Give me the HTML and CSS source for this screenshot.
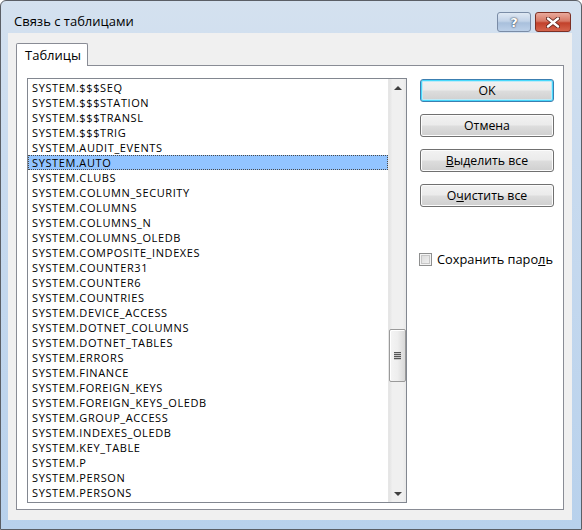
FILE: index.html
```html
<!DOCTYPE html>
<html lang="ru">
<head>
<meta charset="utf-8">
<title>Связь с таблицами</title>
<link rel="stylesheet" href="styles.css">
</head>
<body>
<div class="window">
  <div class="titlebar">
    <span class="title">Связь с таблицами</span>
    <div class="caption-btns">
      <div class="cbtn help">?</div>
      <div class="cbtn close">
        <svg width="14" height="11" viewBox="0 0 14 11"><path d="M2 1.5 L12 9.5 M12 1.5 L2 9.5" stroke="#5a1f17" stroke-width="4" stroke-linecap="round"/><path d="M2 1.5 L12 9.5 M12 1.5 L2 9.5" stroke="#fff" stroke-width="2.4" stroke-linecap="round"/></svg>
      </div>
    </div>
  </div>
  <div class="client">
    <div class="tabs"><div class="tab">Таблицы</div></div>
    <div class="page">
      <div class="listbox">
        <div class="items">
          <div class="item">SYSTEM.$$$SEQ</div>
          <div class="item">SYSTEM.$$$STATION</div>
          <div class="item">SYSTEM.$$$TRANSL</div>
          <div class="item">SYSTEM.$$$TRIG</div>
          <div class="item">SYSTEM.AUDIT_EVENTS</div>
          <div class="item selected">SYSTEM.AUTO</div>
          <div class="item">SYSTEM.CLUBS</div>
          <div class="item">SYSTEM.COLUMN_SECURITY</div>
          <div class="item">SYSTEM.COLUMNS</div>
          <div class="item">SYSTEM.COLUMNS_N</div>
          <div class="item">SYSTEM.COLUMNS_OLEDB</div>
          <div class="item">SYSTEM.COMPOSITE_INDEXES</div>
          <div class="item">SYSTEM.COUNTER31</div>
          <div class="item">SYSTEM.COUNTER6</div>
          <div class="item">SYSTEM.COUNTRIES</div>
          <div class="item">SYSTEM.DEVICE_ACCESS</div>
          <div class="item">SYSTEM.DOTNET_COLUMNS</div>
          <div class="item">SYSTEM.DOTNET_TABLES</div>
          <div class="item">SYSTEM.ERRORS</div>
          <div class="item">SYSTEM.FINANCE</div>
          <div class="item">SYSTEM.FOREIGN_KEYS</div>
          <div class="item">SYSTEM.FOREIGN_KEYS_OLEDB</div>
          <div class="item">SYSTEM.GROUP_ACCESS</div>
          <div class="item">SYSTEM.INDEXES_OLEDB</div>
          <div class="item">SYSTEM.KEY_TABLE</div>
          <div class="item">SYSTEM.P</div>
          <div class="item">SYSTEM.PERSON</div>
          <div class="item">SYSTEM.PERSONS</div>
        </div>
        <div class="scrollbar">
          <div class="sb-btn"><span class="arrow-up"></span></div>
          <div class="track">
            <div class="thumb"><span class="grip"></span><span class="grip"></span><span class="grip"></span><span class="grip"></span></div>
          </div>
          <div class="sb-btn"><span class="arrow-down"></span></div>
        </div>
      </div>
      <div class="side">
        <div class="btn default">OK</div>
        <div class="btn">Отмена</div>
        <div class="btn"><u>В</u>ыделить все</div>
        <div class="btn">О<u>ч</u>истить все</div>
        <label class="check"><span class="box"></span><span>Сохранить паро<u>л</u>ь</span></label>
      </div>
    </div>
  </div>
</div>
</body>
</html>
```

FILE: styles.css
```css
html, body {
  margin: 0;
  padding: 0;
  background: #ffffff;
}
body {
  width: 582px;
  height: 530px;
  overflow: hidden;
  font-family: "Open Sans", "Noto Sans", sans-serif;
  font-size: 12px;
  color: #000;
}
.window {
  box-sizing: border-box;
  width: 582px;
  height: 530px;
  border: 1px solid #5b5f66;
  border-radius: 6px 6px 0 0;
  background: linear-gradient(to bottom, #d4e1ef 0%, #c9dbef 30%, #b8d1ec 100%);
  display: flex;
  flex-direction: column;
}
.titlebar {
  height: 32px;
  display: flex;
  align-items: flex-start;
  justify-content: space-between;
  padding: 0 10px 0 13px;
}
.title {
  margin-top: 11px;
  font-size: 13px;
  color: #000;
}
.caption-btns {
  display: flex;
  gap: 4px;
  margin-top: 11px;
}
.cbtn {
  box-sizing: border-box;
  height: 20px;
  border-radius: 3px;
  display: flex;
  align-items: center;
  justify-content: center;
}
.help {
  width: 34px;
  border: 1px solid #7a8ca6;
  background: linear-gradient(to bottom, #dfe8f3 0%, #c2d3e8 45%, #a9c0dc 55%, #bcd0e8 100%);
  color: #fff;
  font-weight: bold;
  font-size: 13px;
  font-family: "DejaVu Sans", sans-serif;
  text-shadow: 0 0 2px #2d3c52, 0 0 1px #2d3c52;
}
.close {
  width: 36px;
  border: 1px solid #7d3024;
  background: linear-gradient(to bottom, #e9a99b 0%, #d77966 45%, #c2412b 55%, #d5644c 100%);
}
.client {
  flex: 1;
  margin: 0 9px 9px 7px;
  background: #f0f0f0;
  padding: 10px 8px 10px 8px;
  display: flex;
  flex-direction: column;
}
.tabs {
  display: flex;
  height: 22px;
  position: relative;
  z-index: 1;
}
.tab {
  box-sizing: border-box;
  width: 72px;
  height: 23px;
  border: 1px solid #898c95;
  border-bottom: none;
  border-radius: 2px 2px 0 0;
  background: #ffffff;
  padding: 2px 0 0 8px;
  font-size: 13px;
}
.page {
  box-sizing: border-box;
  height: 445px;
  border: 1px solid #898c95;
  background: #ffffff;
  padding: 12px 9px 0 10px;
  display: flex;
  gap: 13px;
}
.listbox {
  box-sizing: border-box;
  width: 380px;
  height: 425px;
  border: 1px solid #828790;
  display: flex;
  background: #fff;
}
.items {
  flex: 1;
  padding-top: 1px;
}
.item {
  height: 15px;
  line-height: 15px;
  padding-left: 4px;
  font-size: 11px;
  letter-spacing: 0.6px;
  white-space: nowrap;
  box-sizing: border-box;
  color: #000;
}
.item.selected {
  background: #92c4ff;
  outline: 1px dotted #4a4a4a;
  outline-offset: -1px;
}
.scrollbar {
  width: 17px;
  display: flex;
  flex-direction: column;
  background: linear-gradient(to right, #e3e3e3 0%, #f0f0f0 20%, #f0f0f0 80%, #e8e8e8 100%);
  border-left: 1px solid #e6e6e6;
}
.sb-btn {
  height: 17px;
  display: flex;
  align-items: center;
  justify-content: center;
}
.arrow-up {
  width: 0;
  height: 0;
  border-left: 4px solid transparent;
  border-right: 4px solid transparent;
  border-bottom: 4px solid #404040;
}
.arrow-down {
  width: 0;
  height: 0;
  border-left: 4px solid transparent;
  border-right: 4px solid transparent;
  border-top: 4px solid #404040;
}
.track {
  flex: 1;
  display: flex;
  flex-direction: column;
}
.thumb {
  box-sizing: border-box;
  margin-top: 233px;
  height: 53px;
  border: 1px solid #9a9a9a;
  border-radius: 2px;
  background: linear-gradient(to right, #f4f4f4 0%, #eeeeee 50%, #d8d8d8 100%);
  box-shadow: inset 1px 1px 0 #ffffff;
  display: flex;
  flex-direction: column;
  align-items: center;
  justify-content: center;
  gap: 1px;
}
.grip {
  width: 7px;
  height: 1px;
  background: #555;
  box-shadow: 0 1px 0 #c8c8c8;
}
.side {
  width: 134px;
  padding-top: 1px;
  display: flex;
  flex-direction: column;
  gap: 12px;
}
.btn {
  box-sizing: border-box;
  height: 23px;
  border: 1px solid #707070;
  border-radius: 3px;
  background: linear-gradient(to bottom, #f2f2f2 0%, #ebebeb 48%, #dddddd 52%, #cfcfcf 100%);
  box-shadow: inset 0 0 0 1px #fcfcfc;
  display: flex;
  align-items: center;
  justify-content: center;
  font-size: 12.3px;
}
.btn.default {
  border-color: #3c7fb1;
  box-shadow: inset 0 0 0 1px #48d8fb, inset 0 0 0 2px #c0eaf7;
}
.check {
  margin-top: 31px;
  display: flex;
  align-items: center;
  gap: 5px;
  font-size: 12.8px;
  margin-left: -1px;
}
.box {
  box-sizing: border-box;
  width: 13px;
  height: 13px;
  border: 1px solid #8e8f8f;
  background: linear-gradient(135deg, #d8d8d8 0%, #f4f4f4 100%);
  box-shadow: inset 0 0 0 1px #f4f4f4, inset 0 0 0 2px #c7c7c7;
}
u {
  text-decoration: underline;
  text-underline-offset: 1px;
}
```
